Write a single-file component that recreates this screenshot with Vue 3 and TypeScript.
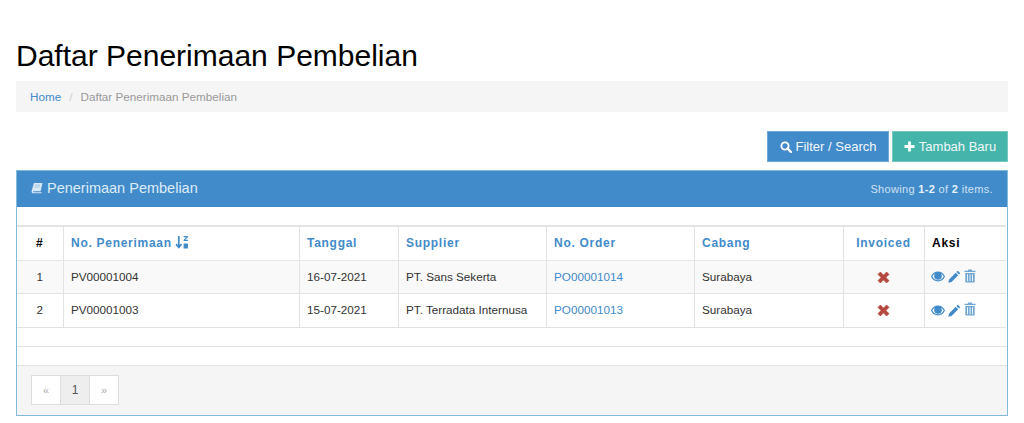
<script setup lang="ts">
const rows = [
  { no: 1, pv: 'PV00001004', date: '16-07-2021', sup: 'PT. Sans Sekerta', po: 'PO00001014', cab: 'Surabaya' },
  { no: 2, pv: 'PV00001003', date: '15-07-2021', sup: 'PT. Terradata Internusa', po: 'PO00001013', cab: 'Surabaya' },
]
</script>

<template>
  <div class="page">
    <h1>Daftar Penerimaan Pembelian</h1>
    <div class="crumb"><a>Home</a><span class="sep">/</span><span>Daftar Penerimaan Pembelian</span></div>
    <div class="actions">
      <button class="btn blue">
        <svg width="12" height="12" viewBox="0 0 12 12"><circle cx="5" cy="5" r="3.6" fill="none" stroke="#fff" stroke-width="1.9"/><path d="M7.6 7.6L11 11" stroke="#fff" stroke-width="2.3" stroke-linecap="round"/></svg>
        <span>Filter / Search</span>
      </button>
      <button class="btn teal">
        <svg width="11" height="11" viewBox="0 0 11 11"><path d="M4.1 .5h2.8v3.6h3.6v2.8H6.900v3.600H4.100V6.900H.5V4.100h3.600z" fill="#fff"/></svg>
        <span>Tambah Baru</span>
      </button>
    </div>
    <section class="panel">
      <header class="head">
        <div class="title">
          <svg width="12" height="12" viewBox="0 0 12 12"><path d="M3 1h8.500L9.600 9.300H2.600c-.6 0-.8.900 0 .9h8.200l-.3 1H2C.8 11.200.3 10 .6 9z" fill="#d9e8f5"/><path d="M4 3.200h5M3.600 5h5" stroke="#7fb2dd" stroke-width=".6"/></svg>
          <span>Penerimaan Pembelian</span>
        </div>
        <div class="summary">Showing <b>1-2</b> of <b>2</b> items.</div>
      </header>
      <div class="gap"></div>
      <table>
        <colgroup>
          <col style="width:46px" /><col style="width:236px" /><col style="width:99px" /><col style="width:148px" />
          <col style="width:148px" /><col style="width:149px" /><col style="width:81px" /><col style="width:82px" />
        </colgroup>
        <thead>
          <tr>
            <th class="c">#</th>
            <th><a>No. Penerimaan
              <svg class="sort" width="14" height="14" viewBox="0 0 13 13"><path d="M3.500 1v10M1 8.500l2.500 3 2.500-3" fill="none" stroke="#428bca" stroke-width="1.600"/><path d="M8 1h4v1l-2.500 2.500H12V5.500H8v-1L10.500 2H8zM8 8h4v4.500H8z" fill="#428bca"/></svg></a></th>
            <th><a>Tanggal</a></th>
            <th><a>Supplier</a></th>
            <th><a>No. Order</a></th>
            <th><a>Cabang</a></th>
            <th class="c"><a>Invoiced</a></th>
            <th>Aksi</th>
          </tr>
        </thead>
        <tbody>
          <tr v-for="r in rows" :key="r.no">
            <td class="c">{{ r.no }}</td>
            <td>{{ r.pv }}</td>
            <td>{{ r.date }}</td>
            <td>{{ r.sup }}</td>
            <td><a>{{ r.po }}</a></td>
            <td>{{ r.cab }}</td>
            <td class="c">
              <svg class="x" width="13" height="13" viewBox="1 1 10 10"><path d="M1.800 3.600l1.800-1.800L6 4.200l2.400-2.400 1.800 1.800L7.800 6l2.400 2.400-1.800 1.800L6 7.800l-2.400 2.400-1.800-1.800L4.200 6z" fill="#b5483f" stroke="#b5483f" stroke-width=".6"/></svg>
            </td>
            <td>
              <div class="icons">
                <svg width="14" height="11" viewBox="0 0 14 11"><path fill-rule="evenodd" d="M0 5.500C1.500 2.200 4 .6 7 .6s5.500 1.600 7 4.900c-1.500 3.300-4 4.900-7 4.900S1.500 8.800 0 5.500zm1.300 0C2.500 7.900 4.500 9.300 7 9.300s4.500-1.400 5.700-3.800c-.7-1.400-1.600-2.400-2.700-3 .5.700.8 1.500.8 2.400a3.800 3.800 0 0 1-7.600 0c0-.9.300-1.700.8-2.400-1.100.6-2 1.600-2.700 3z" fill="#428bca"/></svg>
                <svg width="13" height="13" viewBox="0 0 13 13"><path d="M9.800.7l2.500 2.500-1.400 1.400-2.500-2.500zM7.700 2.800l2.500 2.500-6.600 6.600-3.300.8.800-3.300z" fill="#428bca"/></svg>
                <svg class="trash" width="12" height="14" viewBox="0 0 12 14"><path d="M4.300.5h3.400l.5 1.300h3.300v1.300H.5V1.800h3.300zM1.300 4h9.400v8.500c0 .6-.4 1-1 1H2.300c-.6 0-1-.4-1-1zM3 5.200v7h.9v-7zm2.600 0v7h.9v-7zm2.500 0v7h.9v-7z" fill="#6fa6d6" fill-rule="evenodd"/></svg>
              </div>
            </td>
          </tr>
        </tbody>
      </table>
      <div class="empty"></div>
      <div class="empty"></div>
      <footer class="foot">
        <div class="pager">
          <span class="muted">«</span><span class="on">1</span><span class="muted">»</span>
        </div>
      </footer>
    </section>
  </div>
</template>

<style>
html, body { margin: 0; background: #fff; }
</style>

<style scoped>
.page { padding: 40px 16px 0 16px; font-family: "Liberation Sans", Arial, sans-serif; font-size: 11.7px; color: #333; }
h1 { margin: 0 0 9px; font-size: 30px; line-height: 32px; font-weight: 400; color: #000; }
.crumb { height: 31px; background: #f5f5f5; display: flex; align-items: center; padding-left: 14px; color: #999; }
.crumb a { color: #428bca; }
.sep { color: #ccc; padding: 0 8px; }
.actions { display: flex; justify-content: flex-end; gap: 3px; margin-top: 19px; }
.btn { height: 31px; border: 1px solid #6ea6d8; font: 13px "Liberation Sans", Arial, sans-serif; color: #f2f7fb; display: flex; align-items: center; justify-content: center; gap: 4px; padding: 0; white-space: nowrap; box-sizing: border-box; }
.blue { background: #428bca; width: 122px; }
.teal { background: #44b5a8; width: 116px; border-color: #74c8be; }
.panel { margin-top: 8px; border: 1px solid #80bbdb; height: 244px; box-sizing: content-box; display: flex; flex-direction: column; }
.head { height: 36px; background: #428bca; display: flex; align-items: center; justify-content: space-between; padding: 0 14px; flex: none; }
.title { font-size: 14.5px; color: #deebf6; display: flex; align-items: center; gap: 4px; padding-bottom: 2px; }
.summary { font-size: 11px; color: #cfe2f2; letter-spacing: .33px; }
.summary b { color: #e6f0f8; }
.gap { height: 18px; flex: none; }
table { border-collapse: collapse; table-layout: fixed; width: 989px; border-top: 2px solid #e4e4e4; flex: none; }
th, td { border-right: 1px solid #e2e2e2; padding: 0 6.500px 0 7.500px; text-align: left; }
th:last-child, td:last-child { border-right: 0; }
th { height: 31px; font-weight: 700; color: #000; font-size: 12px; letter-spacing: .72px; border-bottom: 1px solid #e6e6e6; padding-bottom: 2px; }
th a { color: #428bca; }
td { height: 32px; font-size: 11.7px; color: #333; border-bottom: 1px solid #e2e2e2; padding-bottom: 2px; box-sizing: border-box; }
tbody tr:nth-child(1) td { height: 33px; background: #f9f9f9; }
tbody tr:nth-child(2) td { height: 34px; }
td a { color: #428bca; }
.c { text-align: center; padding-left: 7px; padding-right: 7px; }
.sort { vertical-align: -2px; margin-left: -1px; }
.x { vertical-align: middle; margin-top: 2px; }
.icons { display: flex; align-items: center; gap: 3px; margin: 1px 0 0 -1px; }
.trash { margin-top: -2px; }
.empty { flex: none; height: 18px; border-bottom: 1px solid #e2e2e2; }
.foot { flex: 1; background: #f5f5f5; padding: 9px 14px; }
.pager { display: flex; width: 88px; height: 30px; box-sizing: border-box; border: 1px solid #ddd; }
.pager span { flex: 1; display: flex; align-items: center; justify-content: center; background: #fff; }
.pager .on { background: #eee; border-left: 1px solid #ddd; border-right: 1px solid #ddd; color: #555; font-size: 12px; }
.muted { color: #aaa; font-size: 11px; }
</style>
